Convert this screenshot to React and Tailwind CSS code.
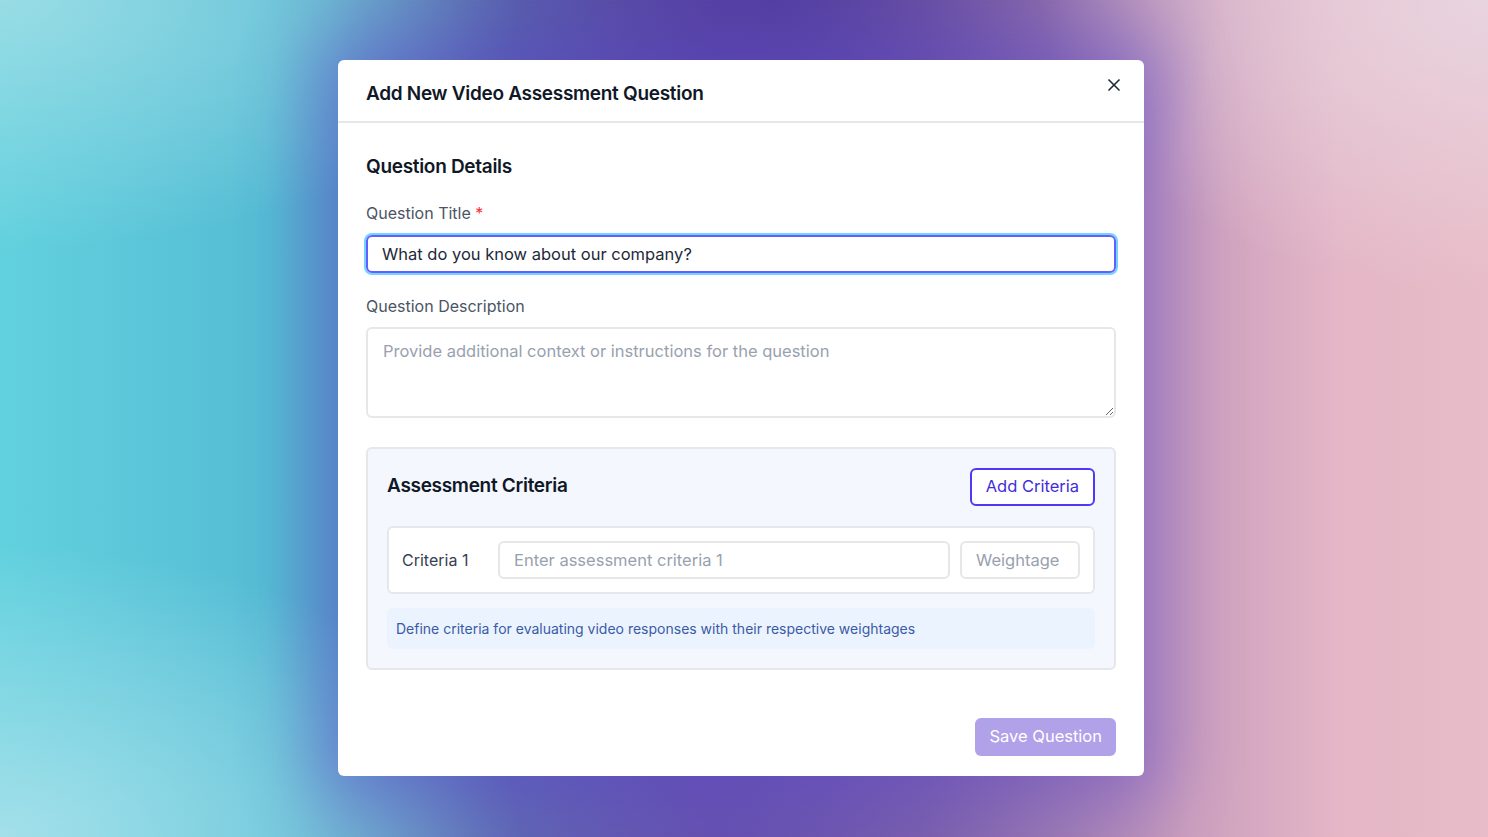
import React, { useState } from "react";
import { X } from "lucide-react";

export default function App() {
  const [title, setTitle] = useState("What do you know about our company?");
  const [description, setDescription] = useState("");
  const [criteria, setCriteria] = useState([{ text: "", weight: "" }]);

  function addCriteria() {
    setCriteria((prev) => [...prev, { text: "", weight: "" }]);
  }

  return (
    <div
      className="w-full h-[837px] overflow-hidden flex items-start justify-center pt-[60px] pr-[6px] bg-[radial-gradient(ellipse_35%_30%_at_0%_0%,rgba(175,225,232,0.7),transparent),radial-gradient(ellipse_30%_35%_at_100%_0%,rgba(232,215,225,0.9),transparent),radial-gradient(ellipse_35%_35%_at_0%_100%,rgba(170,225,235,0.9),transparent),radial-gradient(ellipse_30%_45%_at_52%_0%,rgba(80,60,160,0.9),transparent),radial-gradient(ellipse_30%_40%_at_50%_100%,rgba(100,80,180,0.7),transparent),linear-gradient(90deg,#62d1de_0%,#55bcd4_18%,#5a7ab7_32%,#6a56a8_48%,#8c6ca9_62%,#c79bbc_78%,#e4b6c6_90%,#e8bcc8_100%)]"
      style={{ fontFamily: "Inter, 'Noto Sans', sans-serif" }}
    >
      <div className="w-[806px] bg-white rounded-md shadow-[0_0_70px_25px_rgba(90,70,200,0.45)]">
        <div className="flex items-start justify-between h-[63px] pt-[20px] pl-7 pr-5 border-b-2 border-gray-200">
          <h2 className="text-[19px] font-semibold text-gray-900 tracking-[-0.3px]">
            Add New Video Assessment Question
          </h2>
          <button className="text-gray-800 -mt-[5px] cursor-pointer">
            <X size={20} strokeWidth={2} />
          </button>
        </div>

        <div className="px-7 pt-[30px] pb-5">
          <h3 className="text-[19px] font-semibold text-gray-900 tracking-[-0.3px]">Question Details</h3>

          <label className="block mt-[19px] text-[16px] text-gray-600">
            Question Title <span className="text-red-500">*</span>
          </label>
          <input
            value={title}
            onChange={(ev) => setTitle(ev.target.value)}
            className="mt-[10px] w-full h-[38px] px-[14px] rounded-md border-2 border-indigo-500 ring-2 ring-sky-300 outline-none text-[16.5px] text-gray-800"
          />

          <label className="block mt-[21px] text-[16px] text-gray-600">Question Description</label>
          <textarea
            value={description}
            onChange={(ev) => setDescription(ev.target.value)}
            placeholder="Provide additional context or instructions for the question"
            className="mt-[9px] w-full h-[91px] px-[15px] py-[10px] rounded-md border-2 border-gray-200 outline-none text-[16.5px] text-gray-800 placeholder:text-gray-400 block"
          />

          <div className="mt-[29px] rounded-md border-2 border-gray-200 bg-[#f4f7fd] px-[19px] pt-[19px] pb-[19px]">
            <div className="flex items-center justify-between">
              <h3 className="text-[19px] font-semibold text-gray-900 tracking-[-0.3px]">Assessment Criteria</h3>
              <button
                onClick={addCriteria}
                className="h-[38px] px-[14px] rounded-md border-2 border-indigo-600 bg-white text-[16.5px] text-indigo-700 cursor-pointer"
              >
                Add Criteria
              </button>
            </div>

            <div className="mt-5 flex flex-col gap-3">
              {criteria.map((item, index) => (
                <div
                  key={index}
                  className="flex items-center gap-[10px] h-[68px] px-[13px] rounded-md border-2 border-gray-200 bg-white"
                >
                  <span className="w-[86px] text-[16px] text-gray-700">Criteria {index + 1}</span>
                  <input
                    value={item.text}
                    onChange={(ev) =>
                      setCriteria((prev) =>
                        prev.map((c, i) => (i === index ? { ...c, text: ev.target.value } : c))
                      )
                    }
                    placeholder={`Enter assessment criteria ${index + 1}`}
                    className="flex-1 h-[38px] px-[14px] rounded-md border-2 border-gray-200 outline-none text-[16.5px] placeholder:text-gray-400"
                  />
                  <input
                    value={item.weight}
                    onChange={(ev) =>
                      setCriteria((prev) =>
                        prev.map((c, i) => (i === index ? { ...c, weight: ev.target.value } : c))
                      )
                    }
                    placeholder="Weightage"
                    className="w-[120px] h-[38px] px-[14px] rounded-md border-2 border-gray-200 outline-none text-[16.5px] placeholder:text-gray-400"
                  />
                </div>
              ))}
            </div>

            <div className="mt-[14px] h-[41px] flex items-center px-[9px] rounded-md bg-[#ebf4fe] text-[14px] text-[#3b5aa6]">
              Define criteria for evaluating video responses with their respective weightages
            </div>
          </div>

          <div className="mt-12 flex justify-end">
            <button className="h-[38px] px-[14px] rounded-md bg-[#b1a1e9] text-white text-[16.5px] cursor-not-allowed">
              Save Question
            </button>
          </div>
        </div>
      </div>
    </div>
  );
}
